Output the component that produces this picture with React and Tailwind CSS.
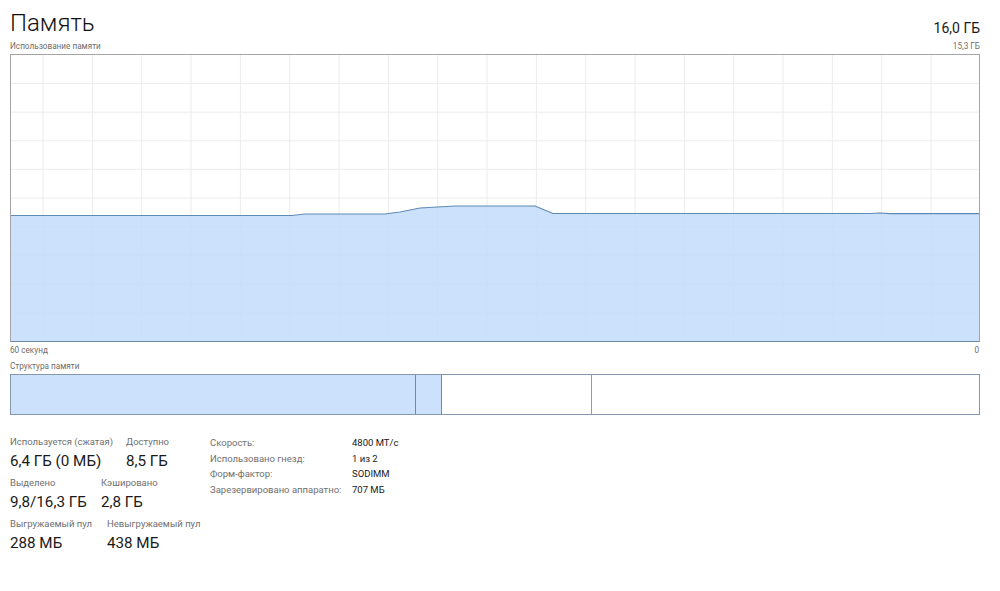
import React from "react";

const points = [
  [0, 160.5], [281, 160.5], [294, 159], [374, 159], [389, 157], [409, 153],
  [444, 151], [524, 151], [542, 158.5], [859, 158.5], [869, 158], [879, 158.7], [968, 158.7],
];

const MemoryChart = () => {
  const w = 968;
  const h = 286;
  const line = points.map((p) => p.join(",")).join(" ");
  const area = `0,${h} ${line} ${w},${h}`;
  const verticals = Array.from({ length: 19 }, (_, k) => 920 - 49.33 * k);
  const horizontals = Array.from({ length: 9 }, (_, k) => 28.6 * (k + 1));

  return (
    <div className="w-[970px] h-[288px] border border-[#a5a5a5] border-b-[#6f8aa6]">
      <svg width={w} height={h} viewBox={`0 0 ${w} ${h}`} className="block">
        {verticals.map((x) => (
          <line key={"v" + x} x1={x} x2={x} y1={0} y2={h} stroke="#ececec" strokeWidth="1" />
        ))}
        {horizontals.map((y) => (
          <line key={"h" + y} x1={0} x2={w} y1={y} y2={y} stroke="#ececec" strokeWidth="1" />
        ))}
        <polygon points={area} fill="#c2dcfb" fillOpacity="0.85" />
        <polyline points={line} fill="none" stroke="#5f8ab4" strokeWidth="1.2" />
      </svg>
    </div>
  );
};

const Stat = ({ label, value, className = "" }) => (
  <div className={"whitespace-nowrap " + className}>
    <div className="text-[9.5px] leading-[14px] text-[#707070]">{label}</div>
    <div className="text-[15.2px] leading-[21px] text-[#1a1a1a] mt-[2px]">{value}</div>
  </div>
);

const info = [
  ["Скорость:", "4800 МТ/с"],
  ["Использовано гнезд:", "1 из 2"],
  ["Форм-фактор:", "SODIMM"],
  ["Зарезервировано аппаратно:", "707 МБ"],
];

export default function App() {
  return (
    <div
      className="w-[1000px] h-[591px] bg-white pl-[10px] overflow-hidden"
      style={{ fontFamily: 'Roboto, "Noto Sans", sans-serif' }}
    >
      <div className="w-[970px]">
        <div className="flex justify-between items-end pt-[8px]">
          <div className="text-[24px] leading-[30px] font-light text-[#111]">Память</div>
          <div className="text-[14px] leading-[20px] text-[#1a1a1a]">16,0 ГБ</div>
        </div>
        <div className="flex justify-between text-[8.2px] leading-[12px] text-[#6d6d6d] mt-[2px] mb-[2px]">
          <span>Использование памяти</span>
          <span>15,3 ГБ</span>
        </div>
        <MemoryChart />
        <div className="flex justify-between text-[8.2px] leading-[12px] text-[#6d6d6d] mt-[2px]">
          <span>60 секунд</span>
          <span className="pr-[1px]">0</span>
        </div>
        <div className="text-[8.2px] leading-[12px] text-[#6d6d6d] mt-[4px] mb-[2px]">Структура памяти</div>
        <div className="flex h-[41px] border border-[#8598ab]">
          <div className="w-[405px] bg-[#cce1fc] border-r border-[#6f8aa6]"></div>
          <div className="w-[26px] bg-[#cce1fc] border-r border-[#6f8aa6]"></div>
          <div className="w-[150px] bg-white border-r border-[#8c9db0]"></div>
          <div className="flex-1 bg-white"></div>
        </div>
        <div className="flex mt-[20px]">
          <div className="w-[200px] flex flex-col gap-[4px]">
            <div className="flex">
              <Stat label="Используется (сжатая)" value="6,4 ГБ (0 МБ)" className="w-[116px]" />
              <Stat label="Доступно" value="8,5 ГБ" />
            </div>
            <div className="flex">
              <Stat label="Выделено" value="9,8/16,3 ГБ" className="w-[91px]" />
              <Stat label="Кэшировано" value="2,8 ГБ" />
            </div>
            <div className="flex">
              <Stat label="Выгружаемый пул" value="288 МБ" className="w-[97px]" />
              <Stat label="Невыгружаемый пул" value="438 МБ" />
            </div>
          </div>
          <div className="flex flex-col">
            {info.map(([k, v]) => (
              <div key={k} className="flex whitespace-nowrap text-[9.5px] leading-[15.5px]">
                <span className="w-[142px] text-[#707070]">{k}</span>
                <span className="text-[#1a1a1a]">{v}</span>
              </div>
            ))}
          </div>
        </div>
      </div>
    </div>
  );
}
